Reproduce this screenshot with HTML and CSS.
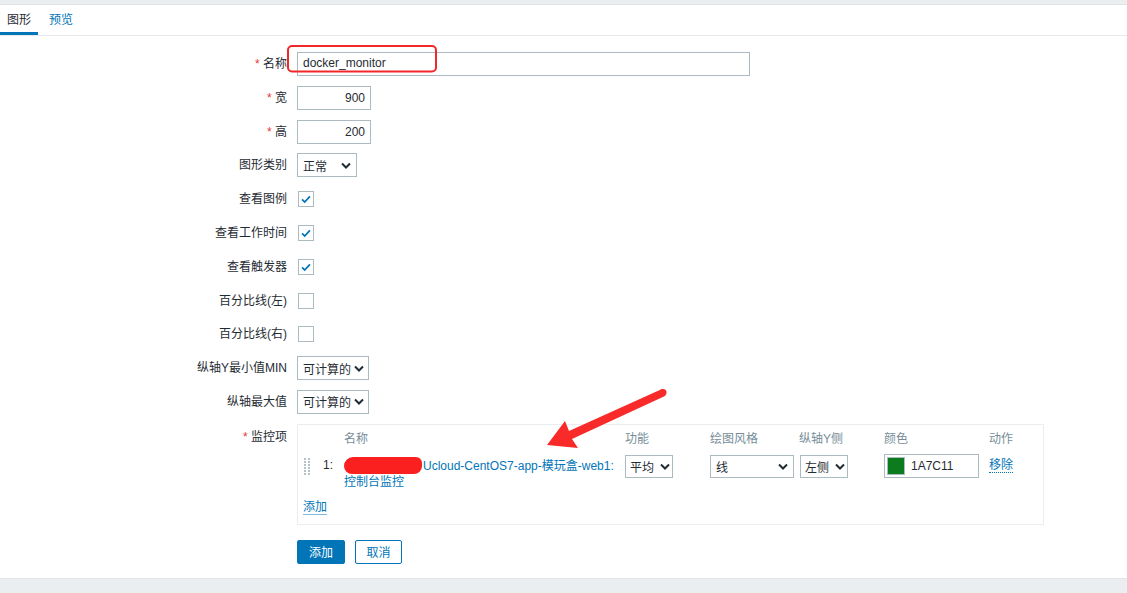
FILE: index.html
```html
<!DOCTYPE html>
<html lang="zh-CN">
<head>
    <meta charset="UTF-8">
    <meta name="viewport" content="width=device-width, initial-scale=1.0">
    <title>图形</title>
    <link rel="stylesheet" href="styles.css">
</head>
<body>
<div id="page">
    <div class="top-strip"></div>
    <ul class="tabs">
        <li class="tab active">图形</li>
        <li class="tab"><a href="#">预览</a></li>
    </ul>

    <div class="form">
        <div class="row">
            <label class="lbl"><span class="req">*</span> 名称</label>
            <input class="txt name-input" type="text" value="docker_monitor">
        </div>
        <div class="row">
            <label class="lbl"><span class="req">*</span> 宽</label>
            <input class="txt num-input" type="text" value="900">
        </div>
        <div class="row">
            <label class="lbl"><span class="req">*</span> 高</label>
            <input class="txt num-input" type="text" value="200">
        </div>
        <div class="row">
            <label class="lbl">图形类别</label>
            <div class="sel w60"><span>正常</span><svg class="chev" viewBox="0 0 10 6"><path d="M1 1l4 4 4-4"/></svg></div>
        </div>
        <div class="row">
            <label class="lbl">查看图例</label>
            <span class="cb checked"><svg viewBox="0 0 16 16"><path d="M3.5 8.5l3 3 6-6.5"/></svg></span>
        </div>
        <div class="row">
            <label class="lbl">查看工作时间</label>
            <span class="cb checked"><svg viewBox="0 0 16 16"><path d="M3.5 8.5l3 3 6-6.5"/></svg></span>
        </div>
        <div class="row">
            <label class="lbl">查看触发器</label>
            <span class="cb checked"><svg viewBox="0 0 16 16"><path d="M3.5 8.5l3 3 6-6.5"/></svg></span>
        </div>
        <div class="row">
            <label class="lbl">百分比线(左)</label>
            <span class="cb"></span>
        </div>
        <div class="row">
            <label class="lbl">百分比线(右)</label>
            <span class="cb"></span>
        </div>
        <div class="row">
            <label class="lbl">纵轴Y最小值MIN</label>
            <div class="sel w72"><span>可计算的</span><svg class="chev" viewBox="0 0 10 6"><path d="M1 1l4 4 4-4"/></svg></div>
        </div>
        <div class="row">
            <label class="lbl">纵轴最大值</label>
            <div class="sel w72"><span>可计算的</span><svg class="chev" viewBox="0 0 10 6"><path d="M1 1l4 4 4-4"/></svg></div>
        </div>
        <div class="row top">
            <label class="lbl"><span class="req">*</span> 监控项</label>
            <div class="items-box">
                <table class="items">
                    <thead>
                        <tr>
                            <th class="c-drag"></th>
                            <th class="c-num"></th>
                            <th class="c-name">名称</th>
                            <th class="c-func">功能</th>
                            <th class="c-style">绘图风格</th>
                            <th class="c-axis">纵轴Y侧</th>
                            <th class="c-color">颜色</th>
                            <th>动作</th>
                        </tr>
                    </thead>
                    <tbody>
                        <tr>
                            <td class="c-drag"><svg class="drag" viewBox="0 0 6 17"><rect x="0" y="0" width="2" height="2"/><rect x="4" y="0" width="2" height="2"/><rect x="0" y="3" width="2" height="2"/><rect x="4" y="3" width="2" height="2"/><rect x="0" y="6" width="2" height="2"/><rect x="4" y="6" width="2" height="2"/><rect x="0" y="9" width="2" height="2"/><rect x="4" y="9" width="2" height="2"/><rect x="0" y="12" width="2" height="2"/><rect x="4" y="12" width="2" height="2"/><rect x="0" y="15" width="2" height="2"/><rect x="4" y="15" width="2" height="2"/></svg></td>
                            <td class="c-num"><div class="num">1:</div></td>
                            <td class="c-name"><div class="item-name"><a href="#"><span class="blot"></span>Ucloud-CentOS7-app-模玩盒-web1: 控制台监控</a></div></td>
                            <td class="c-func"><div class="sel w48"><span>平均</span><svg class="chev" viewBox="0 0 10 6"><path d="M1 1l4 4 4-4"/></svg></div></td>
                            <td class="c-style"><div class="sel w84"><span>线</span><svg class="chev" viewBox="0 0 10 6"><path d="M1 1l4 4 4-4"/></svg></div></td>
                            <td class="c-axis"><div class="sel w48"><span>左侧</span><svg class="chev" viewBox="0 0 10 6"><path d="M1 1l4 4 4-4"/></svg></div></td>
                            <td class="c-color"><div class="color-input"><span class="swatch"></span><span>1A7C11</span></div></td>
                            <td><div class="num"><a href="#" class="dotted">移除</a></div></td>
                        </tr>
                    </tbody>
                </table>
                <div class="add-line"><a href="#" class="underlined">添加</a></div>
            </div>
        </div>
        <div class="row buttons">
            <span class="lbl"></span>
            <div class="btn-group">
                <button class="btn primary">添加</button>
                <button class="btn alt">取消</button>
            </div>
        </div>
    </div>

    <div class="footer"></div>

    <!-- annotations drawn over the screenshot -->
    <svg class="marks" viewBox="0 0 1127 593">
        <rect x="288" y="46" width="148" height="25.5" rx="4" ry="4" />
        <polygon class="arrow" points="547,445 565,421 569,431 662,389 665,396 572,439 578,448" />
        <circle class="arrow" cx="663" cy="392.5" r="3.5" />
    </svg>
</div>
</body>
</html>
```

FILE: styles.css
```css
* {
    box-sizing: border-box;
}
body {
    margin: 0;
    background: #fff;
    font-family: "Liberation Sans", Arial, "Noto Sans CJK SC", sans-serif;
    font-size: 12px;
    color: #1f2c33;
}
a {
    color: #0275b8;
    text-decoration: none;
}
#page {
    position: relative;
    width: 1127px;
    height: 593px;
    display: flex;
    flex-direction: column;
    overflow: hidden;
}

.top-strip {
    height: 5px;
    background: #ebeef0;
    border-bottom: 1px solid #dfe4e7;
}
.tabs {
    list-style: none;
    margin: 0;
    padding: 0;
    height: 31px;
    display: flex;
    gap: 4px;
    border-bottom: 1px solid #e6e9eb;
}
.tab {
    padding: 1px 7px 0;
    line-height: 28px;
    height: 30px;
}
.tab.active {
    border-bottom: 3px solid #0275b8;
}

.form {
    flex: 1;
    padding-top: 16px;
    display: flex;
    flex-direction: column;
    gap: 9.8px;
}
.row {
    display: flex;
    align-items: center;
    min-height: 24px;
}
.row.top {
    align-items: flex-start;
}
.lbl {
    width: 297px;
    flex: none;
    padding-right: 10px;
    text-align: right;
    line-height: 24px;
}
.row.top .lbl {
    padding-top: 1px;
}
.req {
    color: #e33734;
}

.txt {
    height: 24px;
    border: 1px solid #acbbc2;
    font: inherit;
    color: #1f2c33;
    padding: 0 5px;
    margin: 0;
    outline: none;
}
.name-input {
    width: 453px;
    padding-bottom: 2px;
}
.num-input {
    width: 74px;
    text-align: right;
}

.sel {
    height: 24px;
    border: 1px solid #acbbc2;
    display: flex;
    align-items: center;
    justify-content: space-between;
    padding: 0 5px 0 5px;
    background: #fff;
}
.sel.w48 {
    width: 48px;
    height: 23px;
    padding: 0 2px 0 4px;
}
.sel.w60 { width: 60px; }
.sel.w72 { width: 72px; padding: 0 4px 0 5px; }
.sel.w84 { width: 84px; height: 23px; }
.chev {
    width: 10px;
    height: 7px;
    flex: none;
    fill: none;
    stroke: #1f2c33;
    stroke-width: 2;
}

.cb {
    width: 16px;
    height: 16px;
    border: 1px solid #acbbc2;
    margin-left: 1px;
    display: flex;
    align-items: center;
    justify-content: center;
}
.cb svg {
    width: 14px;
    height: 14px;
    fill: none;
    stroke: #0275b8;
    stroke-width: 2;
}

.items-box {
    width: 747px;
    height: 101px;
    border: 1px solid #ebeef0;
    padding: 0 5px;
}
.items {
    border-collapse: collapse;
}
.items th {
    text-align: left;
    font-weight: normal;
    color: #768d99;
    padding: 5px 0 3px;
    line-height: 18px;
}
.items td {
    padding: 4px 0 0;
    vertical-align: top;
}
.c-drag { width: 20px; }
.c-num { width: 21px; }
.c-name { width: 281px; }
.c-func { width: 85px; }
.c-style { width: 89px; }
.c-axis { width: 85px; }
.c-color { width: 105px; }
.items td.c-axis {
    padding-left: 1px;
}
.drag {
    display: block;
    width: 6px;
    height: 17px;
    margin: 3px 0 0 1px;
    fill: #b4c2c8;
}
.num {
    line-height: 16px;
    padding-top: 2px;
}
.item-name {
    line-height: 16px;
    padding-top: 2px;
    padding-right: 10px;
}
.blot {
    display: inline-block;
    width: 78px;
    height: 17px;
    background: #fb2020;
    border-radius: 9px 6px 8px 8px;
    vertical-align: -4px;
    margin-right: 1px;
}
.color-input {
    width: 95px;
    height: 24px;
    margin-top: -1px;
    border: 1px solid #acbbc2;
    display: flex;
    align-items: center;
    gap: 6px;
    padding-left: 2px;
}
.swatch {
    width: 18px;
    height: 18px;
    background: #0b7b1e;
    border: 1px solid #acbbc2;
}
.dotted {
    border-bottom: 1px dotted #0275b8;
}
.underlined {
    border-bottom: 1px solid rgba(2, 117, 184, 0.5);
}
.add-line {
    line-height: 16px;
    margin-top: 9px;
}

.buttons {
    margin-top: 5px;
}
.btn-group {
    display: flex;
    gap: 10px;
}
.btn {
    height: 24px;
    font: inherit;
    font-size: 12px;
    border-radius: 2px;
    padding: 0 10px;
    cursor: pointer;
}
.btn.primary {
    background: #0275b8;
    border: 1px solid #0275b8;
    color: #fff;
    width: 48px;
}
.btn.alt {
    background: #fff;
    border: 1px solid #0275b8;
    color: #0275b8;
    width: 47px;
}

.footer {
    height: 15px;
    flex: none;
    background: #ebeef0;
    border-top: 1px solid #dfe4e7;
}

.marks {
    position: absolute;
    left: 0;
    top: 0;
    width: 1127px;
    height: 593px;
    pointer-events: none;
}
.marks rect {
    fill: none;
    stroke: #f2272a;
    stroke-width: 2;
}
.marks .arrow {
    fill: #f82a2a;
}
```
